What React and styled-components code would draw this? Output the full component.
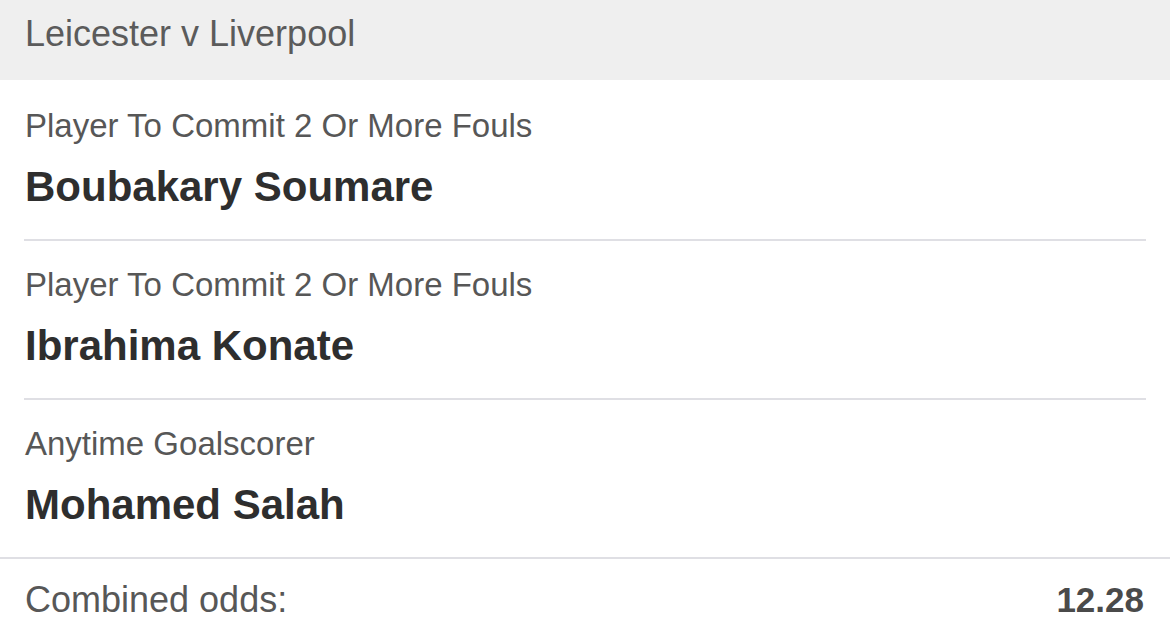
import React from 'react';
import styled, { createGlobalStyle } from 'styled-components';

const GlobalStyle = createGlobalStyle`
    html, body {
        margin: 0;
        padding: 0;
        background: #ffffff;
        font-family: "Liberation Sans", Arial, Helvetica, sans-serif;
    }
`

const Slip = styled.div`
    width: 1170px;
    height: 634px;
    display: flex;
    flex-direction: column;
    background: #ffffff;
    overflow: hidden;
`

const MatchHeader = styled.div`
    height: 80px;
    box-sizing: border-box;
    padding: 14px 25px 0;
    background: #efefef;
    color: #5b5b5b;
    font-size: 36px;
    line-height: 40px;
`

const Legs = styled.div`
    padding-top: 2px;
    display: flex;
    flex-direction: column;
`

const Leg = styled.div`
    display: flex;
    flex-direction: column;
    margin: 0 24px;
    padding: 24px 1px 28px;
    border-bottom: ${({ last }) => last ? 'none' : '2px solid #dfdfe4'};
`

const Market = styled.div`
    color: #575757;
    font-size: 33px;
    line-height: 40px;
`

const Selection = styled.div`
    margin-top: 17px;
    color: #2e2e2e;
    font-size: 42px;
    font-weight: 700;
    line-height: 48px;
`

const Footer = styled.div`
    margin-top: auto;
    display: flex;
    justify-content: space-between;
    align-items: flex-start;
    height: 77px;
    box-sizing: border-box;
    padding: 21px 26px 0 25px;
    border-top: 2px solid #dfdfe4;
    color: #575757;
    font-size: 36px;
    line-height: 40px;
`

const Odds = styled.span`
    color: #4a4a4a;
    font-weight: 700;
    font-size: 35px;
`

const legs = [
    { market: 'Player To Commit 2 Or More Fouls', player: 'Boubakary Soumare' },
    { market: 'Player To Commit 2 Or More Fouls', player: 'Ibrahima Konate' },
    { market: 'Anytime Goalscorer', player: 'Mohamed Salah' },
];

function App() {
    return (
        <>
            <GlobalStyle />
            <Slip>
                <MatchHeader>Leicester v Liverpool</MatchHeader>
                <Legs>
                    {legs.map((leg, i) => (
                        <Leg key={leg.player} last={i === legs.length - 1}>
                            <Market>{leg.market}</Market>
                            <Selection>{leg.player}</Selection>
                        </Leg>
                    ))}
                </Legs>
                <Footer>
                    <span>Combined odds:</span>
                    <Odds>12.28</Odds>
                </Footer>
            </Slip>
        </>
    )
}

export default App
